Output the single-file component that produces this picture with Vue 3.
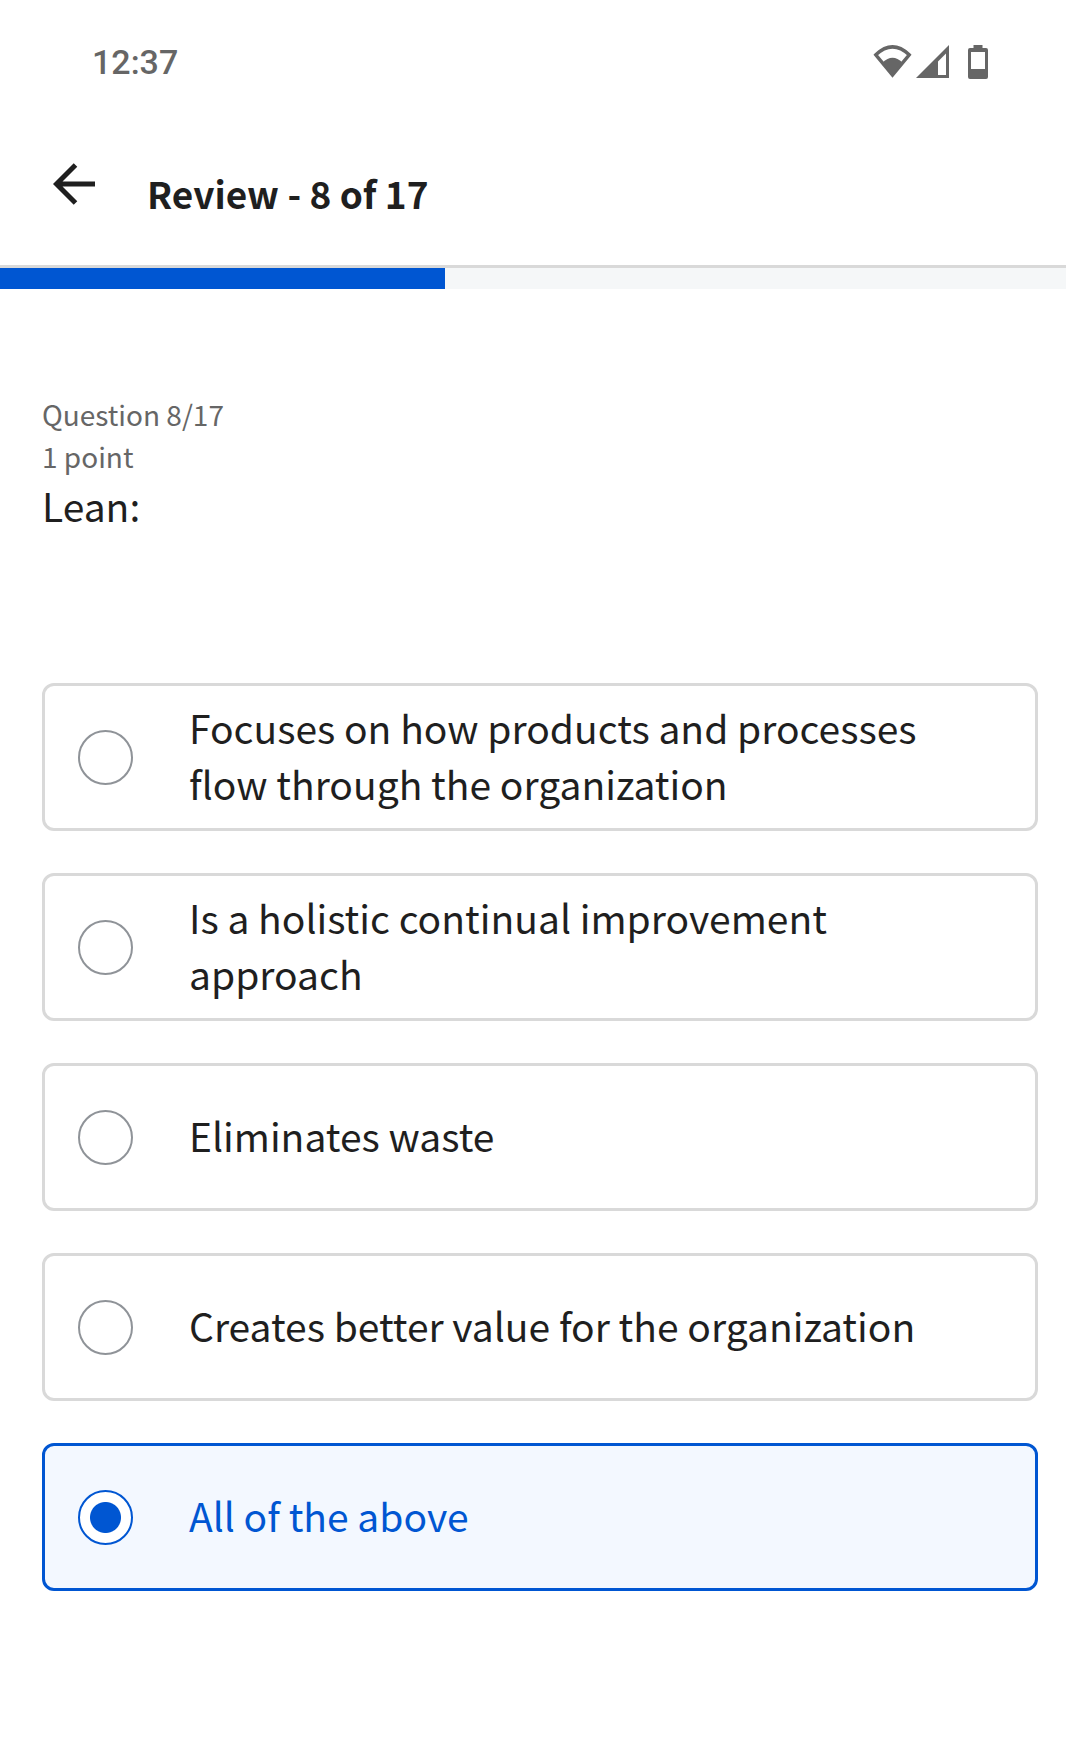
<script setup>
import { ref } from 'vue'

const current = 8
const total = 17
const options = [
  'Focuses on how products and processes flow through the organization',
  'Is a holistic continual improvement approach',
  'Eliminates waste',
  'Creates better value for the organization',
  'All of the above',
]
const selected = ref(4)
const progress = ((current - 1) / (total - 1)) * 100 - 2
</script>

<template>
  <div class="screen">
    <div class="status-bar">
      <time class="clock">12:37</time>
      <div class="status-icons">
        <svg class="wifi" width="40" height="36" viewBox="0 0 40 36" aria-hidden="true">
          <path d="M2.800 10.800Q19.500-5 36.200 10.800L19.500 31Z" fill="none" stroke="#666" stroke-width="3.400" />
          <path d="M9.500 18.500Q19.500 9 29.500 18.500L19.500 32Z" fill="#666" />
        </svg>
        <svg class="signal" width="34" height="36" viewBox="0 0 34 36" aria-hidden="true">
          <path fill="#666" fill-rule="evenodd" d="M33 1V34H0ZM30 9.500L22 17.500V31H30Z" />
        </svg>
        <svg class="battery" width="20" height="36" viewBox="0 0 20 36" aria-hidden="true">
          <path fill="#666" fill-rule="evenodd" d="M5.500 1H14.500V4H18Q20 4 20 6V33Q20 35 18 35H2Q0 35 0 33V6Q0 4 2 4H5.500ZM3 8V25H17V8Z" />
        </svg>
      </div>
    </div>

    <header class="app-bar">
      <button class="back" type="button" aria-label="Back">
        <svg width="42" height="42" viewBox="0 0 42 42" aria-hidden="true">
          <path d="M42 21H4M22.500 2L3.500 21L22.500 40" fill="none" stroke="#1f1f1f" stroke-width="5" />
        </svg>
      </button>
      <h1 class="title">Review - {{ current }} of {{ total }}</h1>
    </header>

    <div class="progress" role="progressbar" :aria-valuenow="current" aria-valuemin="1" :aria-valuemax="total">
      <div class="progress-fill" :style="{ width: progress + '%' }"></div>
    </div>

    <main class="content">
      <p class="meta">Question {{ current }}/{{ total }}</p>
      <p class="meta">1 point</p>
      <h2 id="prompt" class="prompt">Lean:</h2>
      <div class="options" role="radiogroup" aria-labelledby="prompt">
        <label
          v-for="(option, index) in options"
          :key="option"
          class="option"
          :class="{ selected: selected === index }"
        >
          <input v-model="selected" class="radio" type="radio" name="answer" :value="index" />
          <span class="option-text">{{ option }}</span>
        </label>
      </div>
    </main>
  </div>
</template>

<style>
body {
  margin: 0;
  background: #fff;
}
</style>

<style scoped>
.screen {
  font-family: "Noto Sans CJK SC", "Noto Sans", sans-serif;
  color: #1f1f1f;
  background: #fff;
}
.status-bar {
  display: flex;
  align-items: center;
  justify-content: space-between;
  height: 124px;
  padding: 0 78px 0 92px;
  box-sizing: border-box;
}
.clock {
  font: 500 34px/40px Roboto, sans-serif;
  color: #666;
}
.status-icons {
  display: flex;
  align-items: center;
}
.signal {
  margin-left: 3px;
}
.battery {
  margin-left: 18px;
}
.status-icons svg {
  display: block;
}
.app-bar {
  display: flex;
  align-items: center;
  height: 141px;
  padding: 0 53px;
  gap: 52px;
  border-bottom: 3px solid #d9d9d9;
}
.back {
  display: flex;
  padding: 0;
  margin-bottom: 22px;
  border: 0;
  background: none;
  cursor: pointer;
}
.title {
  margin: 0 0 4px;
  font-size: 37px;
  line-height: 56px;
  font-weight: 700;
}
.progress {
  height: 21px;
  background: #f5f7f8;
}
.progress-fill {
  height: 100%;
  background: #0056d2;
}
.content {
  padding: 104px 28px 168px 42px;
}
.meta {
  margin: 0;
  font-size: 28px;
  line-height: 42px;
  color: #666;
}
.prompt {
  margin: 0;
  font-size: 39px;
  line-height: 56px;
  font-weight: 400;
}
.options {
  display: grid;
  gap: 42px;
  margin-top: 150px;
}
.option {
  display: flex;
  align-items: center;
  gap: 56px;
  min-height: 148px;
  padding: 13px 56px 13px 33px;
  box-sizing: border-box;
  border: 3px solid #d9d9d9;
  border-radius: 12px;
  cursor: pointer;
}
.radio {
  flex: none;
  appearance: none;
  width: 55px;
  height: 55px;
  margin: 0;
  border: 2px solid #8f9398;
  border-radius: 50%;
  background: #fff;
}
.option-text {
  padding-bottom: 4px;
  font-size: 39px;
  line-height: 56px;
}
.selected {
  border-color: #0056d2;
  background: #f3f8ff;
  color: #0056d2;
}
.radio:checked {
  border-color: #0056d2;
  background: radial-gradient(circle, #0056d2 15px, #fff 16px);
}
</style>
